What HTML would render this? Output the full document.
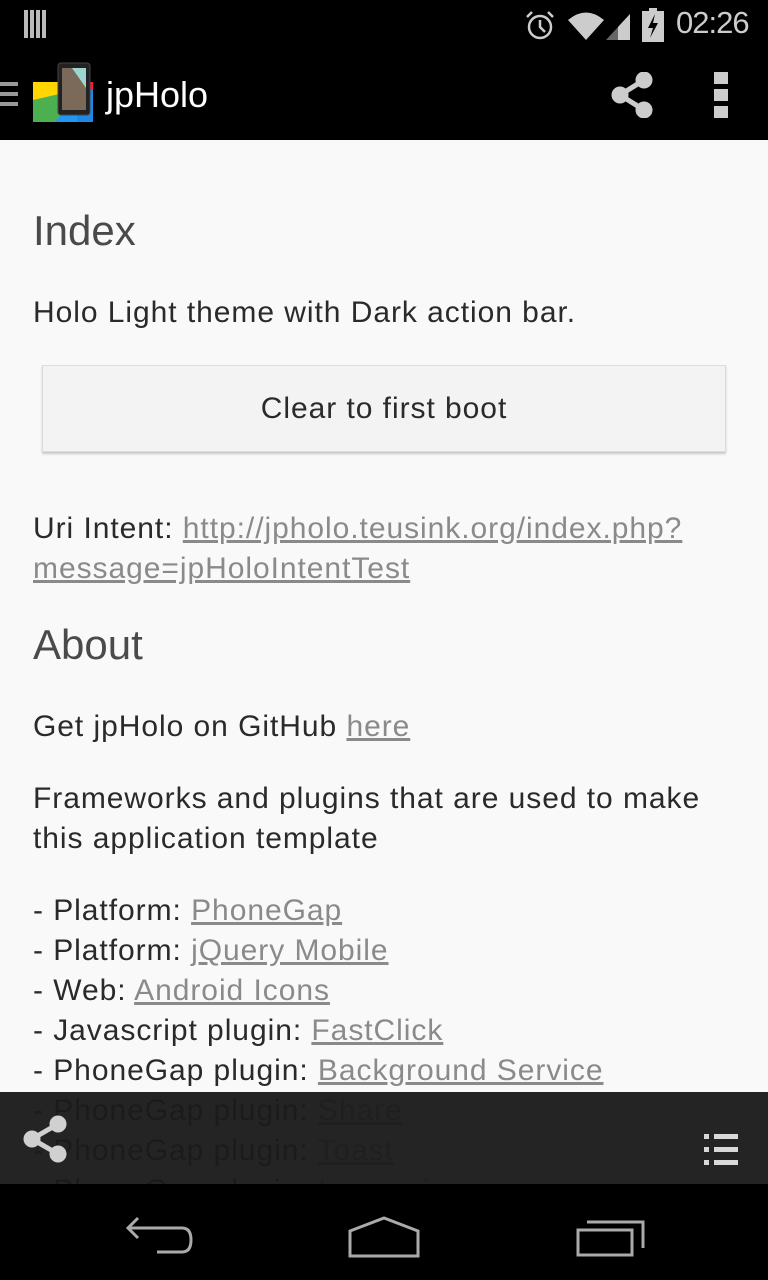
<!DOCTYPE html>
<html><head><meta charset="utf-8"><style>
*{margin:0;padding:0;box-sizing:border-box}
body{width:768px;height:1280px;overflow:hidden;background:#f9f9f9;font-family:"Liberation Sans",sans-serif;position:relative;color:#2a2a2a}
.l{position:absolute;left:33px;font-size:30px;letter-spacing:0.95px;line-height:40px;white-space:nowrap}
a{color:#8a8a8a;text-decoration:underline}
.h{position:absolute;left:33px;font-size:42px;font-weight:300;color:#4a4a4a;line-height:50px}
#status{position:absolute;top:0;left:0;width:768px;height:50px;background:#000}
#bar{position:absolute;top:50px;left:0;width:768px;height:90px;background:#000}
#foot{position:absolute;top:1092px;left:0;width:768px;height:92px;background:rgba(27,27,27,0.96)}
#nav{position:absolute;top:1184px;left:0;width:768px;height:96px;background:#000}
</style></head><body>
<div class="h" style="top:206px">Index</div>
<div class="l" style="top:293px">Holo Light theme with Dark action bar.</div>
<div style="position:absolute;left:42px;top:365px;width:684px;height:87px;background:#f3f3f3;border:1px solid #dcdcdc;box-shadow:0 2px 2px #c8c8c8;text-align:center;line-height:86px;font-size:30px;letter-spacing:0.95px;color:#2a2a2a">Clear to first boot</div>
<div class="l" style="top:509px">Uri Intent: <a>http://jpholo.teusink.org/index.php?</a></div>
<div class="l" style="top:549px"><a>message=jpHoloIntentTest</a></div>
<div class="h" style="top:620px">About</div>
<div class="l" style="top:707px">Get jpHolo on GitHub <a>here</a></div>
<div class="l" style="top:779px">Frameworks and plugins that are used to make</div>
<div class="l" style="top:819px">this application template</div>
<div class="l" style="top:891px">- Platform: <a>PhoneGap</a></div>
<div class="l" style="top:931px">- Platform: <a>jQuery Mobile</a></div>
<div class="l" style="top:971px">- Web: <a>Android Icons</a></div>
<div class="l" style="top:1011px">- Javascript plugin: <a>FastClick</a></div>
<div class="l" style="top:1051px">- PhoneGap plugin: <a>Background Service</a></div>
<div class="l" style="top:1091px">- PhoneGap plugin: <a>Share</a></div>
<div class="l" style="top:1131px">- PhoneGap plugin: <a>Toast</a></div>
<div class="l" style="top:1171px">- PhoneGap plugin: <a>Insomnia</a></div>

<div id="foot">
<svg style="position:absolute;left:22px;top:22px" width="46" height="50" viewBox="0 0 46 50"><g stroke="#d0d0d0" stroke-width="5" fill="#d0d0d0"><line x1="36" y1="10" x2="10" y2="25"/><line x1="10" y1="25" x2="36" y2="40"/><circle cx="36" cy="10" r="6"/><circle cx="10" cy="25" r="6"/><circle cx="36" cy="40" r="6"/></g></svg>
<svg style="position:absolute;left:704px;top:40px" width="36" height="36" viewBox="0 0 36 36" fill="#d8d8d8"><rect x="0" y="2" width="5" height="5"/><rect x="10" y="2" width="24" height="5"/><rect x="0" y="15" width="5" height="5"/><rect x="10" y="15" width="24" height="5"/><rect x="0" y="28" width="5" height="5"/><rect x="10" y="28" width="24" height="5"/></svg>
</div>
<div id="nav">
<svg style="position:absolute;left:124px;top:32px" width="72" height="40" viewBox="0 0 72 40" fill="none" stroke="#aaa" stroke-width="3"><path d="M14 2 L4 12 L14 22"/><path d="M4 12 H58 Q67 12 67 24 Q67 36 58 36 H33"/></svg>
<svg style="position:absolute;left:345px;top:32px" width="78" height="42" viewBox="0 0 78 42" fill="none" stroke="#aaa" stroke-width="3"><path d="M5 40 V15 L39 2 L73 15 V40 Z"/></svg>
<svg style="position:absolute;left:575px;top:34px" width="72" height="40" viewBox="0 0 72 40" fill="none" stroke="#aaa" stroke-width="3"><rect x="3" y="12" width="54" height="25"/><path d="M12 4 H68 V30"/></svg>
</div>

<div id="status">
<svg style="position:absolute;left:24px;top:10px" width="24" height="30" viewBox="0 0 24 30" fill="#bbb"><rect x="0" y="0" width="4" height="28"/><rect x="6" y="0" width="4" height="28"/><rect x="12" y="0" width="4" height="28"/><rect x="18" y="0" width="4" height="28"/></svg>
<svg style="position:absolute;left:524px;top:10px" width="32" height="32" viewBox="0 0 32 32" fill="none" stroke="#ccc" stroke-width="2.5"><circle cx="16" cy="17" r="11"/><path d="M16 10 V17 L21 22"/><path d="M3 7 L8 2 M29 7 L24 2"/></svg>
<svg style="position:absolute;left:568px;top:10px" width="64" height="32" viewBox="0 0 64 32"><path d="M0 10 Q18 -5 36 10 L18 30 Z" fill="#ccc"/><path d="M38 30 L62 4 V30 Z" fill="#666"/><path d="M50 17 L62 4 V30 H50 Z" fill="#ccc"/></svg>
<svg style="position:absolute;left:642px;top:8px" width="22" height="34" viewBox="0 0 22 34"><rect x="7" y="0" width="8" height="4" fill="#ccc"/><rect x="0" y="3" width="22" height="31" fill="#ccc"/><path d="M13 6 L6 20 H11 L8 30 L16 15 H11 Z" fill="#000"/></svg>
<div style="position:absolute;left:676px;top:5px;font-size:31px;color:#ccc;letter-spacing:-1px">02:26</div>
</div>

<div id="bar">
<svg style="position:absolute;left:0;top:30px" width="20" height="30" viewBox="0 0 20 30" fill="#999"><rect x="0" y="2" width="18" height="4"/><rect x="0" y="12" width="18" height="4"/><rect x="0" y="22" width="18" height="4"/></svg>
<svg style="position:absolute;left:30px;top:10px" width="70" height="70" viewBox="0 0 70 70"><rect x="3" y="22" width="44" height="40" fill="#ffd600"/><path d="M3 40 L47 30 V62 H3 Z" fill="#4caf50"/><path d="M25 62 L47 35 V62 Z" fill="#2196f3"/><rect x="47" y="22" width="16" height="40" fill="#1e88e5"/><rect x="47" y="22" width="16" height="8" fill="#ff1744"/><rect x="28" y="3" width="32" height="52" rx="3" fill="#222" stroke="#444"/><path d="M32 8 H56 V50 H32 Z" fill="#7b6a5a"/><path d="M42 8 H56 V28 Z" fill="#9ed6cf"/></svg>
<div style="position:absolute;left:106px;top:24px;font-size:36px;color:#fff">jpHolo</div>
<svg style="position:absolute;left:610px;top:22px" width="44" height="46" viewBox="0 0 44 46"><g stroke="#ccc" stroke-width="5" fill="#ccc"><line x1="34" y1="8" x2="10" y2="23"/><line x1="10" y1="23" x2="34" y2="38"/><circle cx="34" cy="8" r="6"/><circle cx="10" cy="23" r="6"/><circle cx="34" cy="38" r="6"/></g></svg>
<svg style="position:absolute;left:714px;top:22px" width="16" height="46" viewBox="0 0 16 46" fill="#ccc"><rect x="0" y="0" width="14" height="12"/><rect x="0" y="17" width="14" height="12"/><rect x="0" y="34" width="14" height="12"/></svg>
</div>
</body></html>
